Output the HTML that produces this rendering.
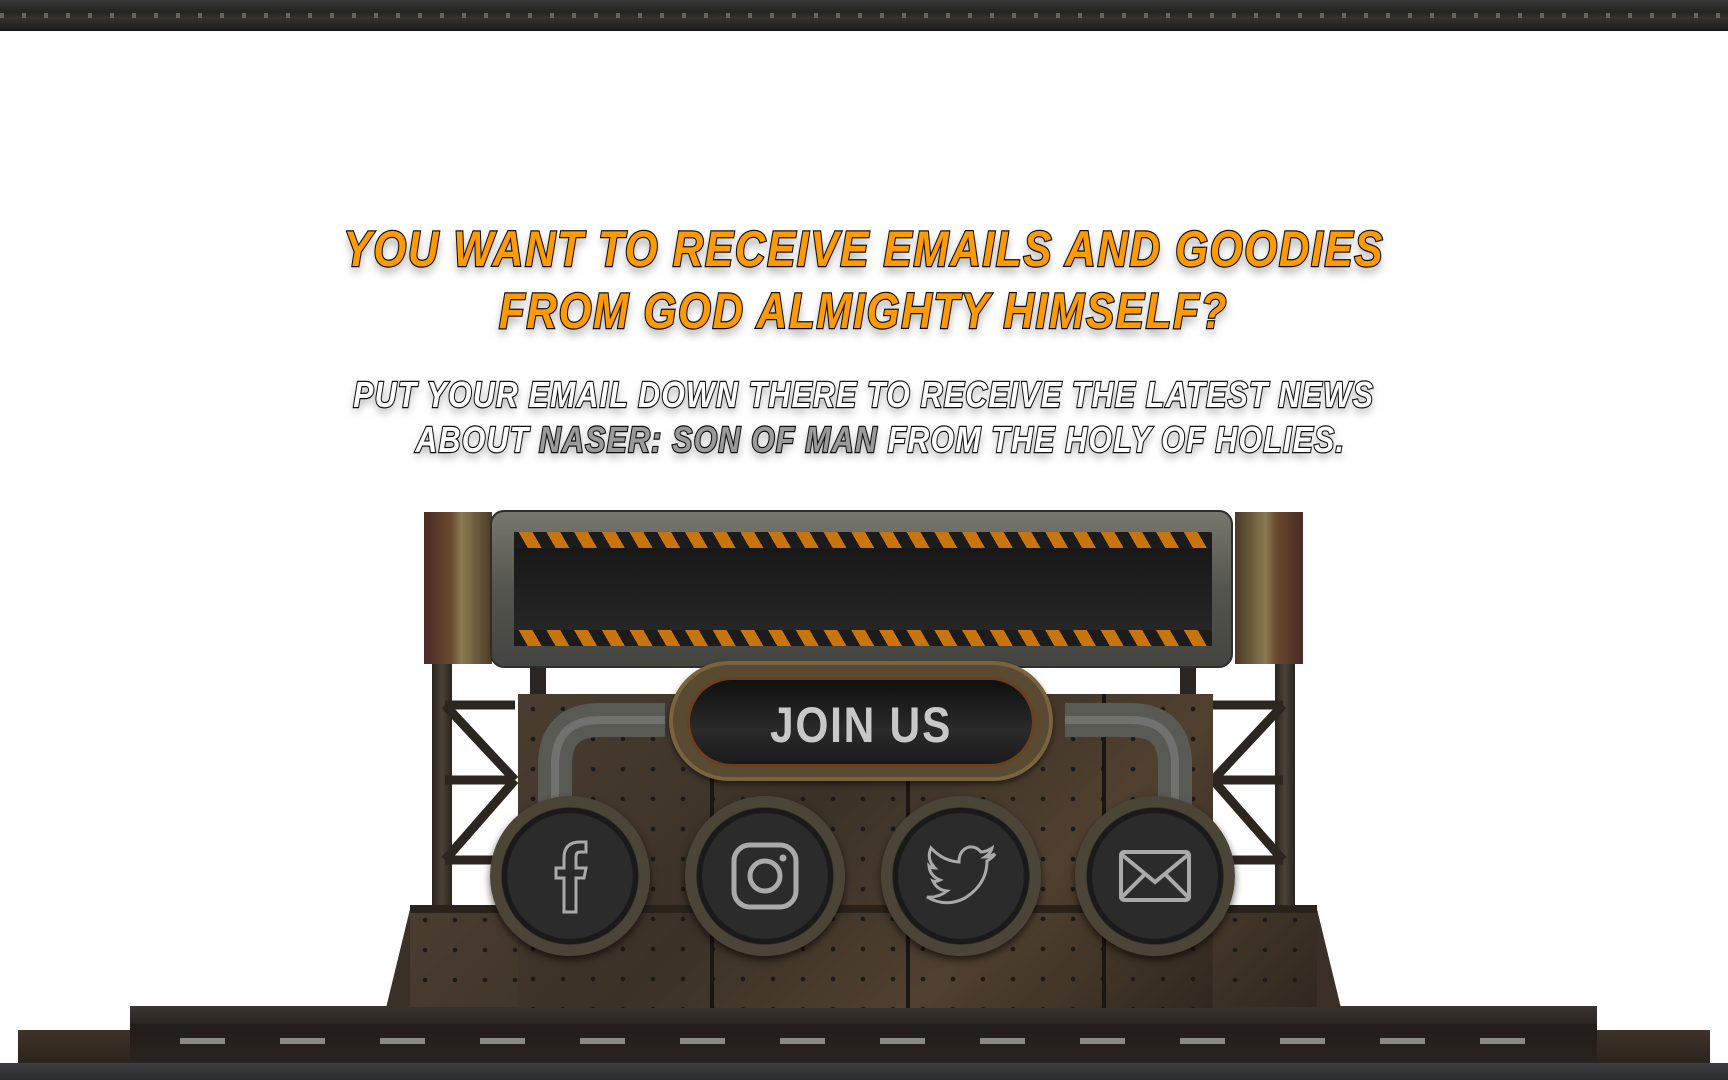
<!DOCTYPE html>
<html><head><meta charset="utf-8">
<style>
*{margin:0;padding:0;box-sizing:border-box}
body{width:1728px;height:1080px;background:#fff;position:relative;overflow:hidden;font-family:"Liberation Sans",sans-serif}
.abs{position:absolute}
.topbar{left:0;top:0;width:1728px;height:31px;background:linear-gradient(#3a3a36,#23231f 40%,#35332d 60%,#1b1b18);border-bottom:1px solid #111}
.topbar:after{content:"";position:absolute;left:0;right:0;top:13px;height:5px;background:repeating-linear-gradient(90deg,#6b6455 0 4px,transparent 4px 22px)}
.line{position:absolute;left:0;width:1728px;text-align:center;font-weight:bold;font-style:italic;white-space:nowrap}
.line span{display:inline-block;transform-origin:center}
.h{color:#ff9a00;font-size:50px;-webkit-text-stroke:2.5px #111;paint-order:stroke fill;text-shadow:0 6px 10px rgba(0,0,0,.35);letter-spacing:2px}
.h span{transform:scaleX(.845)}
.s{color:#fff;font-size:36px;-webkit-text-stroke:2.4px #111;paint-order:stroke fill;text-shadow:0 5px 9px rgba(0,0,0,.35);letter-spacing:1.5px}
.s span{transform:scaleX(.84)}
.g{color:#9a9a9a}
.metal{background:linear-gradient(#77776f,#55554f 50%,#444440);}
.body{background-image:radial-gradient(circle,#1a1a1a 0 2px,transparent 2.5px),linear-gradient(135deg,#4a3d30,#3a3127 40%,#50402f 70%,#302820);background-size:30px 30px,100% 100%}
.haz{background:repeating-linear-gradient(60deg,#1c1c1c 0 12px,#c87510 12px 24px)}
.port{position:absolute;width:160px;height:160px;border-radius:50%;background:radial-gradient(circle,#2b2b2b 0 55%,#1a1a1a 56% 60%,#4b4538 61% 72%,#2a2620 73% 76%,#5c5344 77% 90%,#2a241c 91%);box-shadow:0 4px 8px rgba(0,0,0,.6)}
.port svg{position:absolute;left:40px;top:40px}
</style></head><body>
<div class="abs topbar"></div>

<div class="line h" style="top:220px"><span>YOU WANT TO RECEIVE EMAILS AND GOODIES</span></div>
<div class="line h" style="top:282px"><span>FROM GOD ALMIGHTY HIMSELF?</span></div>
<div class="line s" style="top:374px"><span>PUT YOUR EMAIL DOWN THERE TO RECEIVE THE LATEST NEWS</span></div>
<div class="line s" style="top:419px;left:16px"><span>ABOUT <i class="g">NASER: SON OF MAN</i> FROM THE HOLY OF HOLIES.</span></div>

<!-- base platform -->
<div class="abs" style="left:18px;top:1030px;width:115px;height:34px;background:linear-gradient(#3f3328,#2a241e)"></div>
<div class="abs" style="left:1595px;top:1030px;width:115px;height:34px;background:linear-gradient(#3f3328,#2a241e)"></div>
<div class="abs" style="left:130px;top:1006px;width:1467px;height:58px;background:linear-gradient(#3a3530 0,#2b2623 30%,#221d1a 32%,#2a2420 100%)"></div>
<div class="abs" style="left:165px;top:1038px;width:1400px;height:6px;background:repeating-linear-gradient(90deg,transparent 0 15px,#8a8a84 15px 60px,transparent 60px 100px)"></div>
<div class="abs" style="left:0;top:1063px;width:1728px;height:17px;background:linear-gradient(#3d3f41,#292b2d)"></div>

<!-- scaffolding -->
<div class="abs" style="left:432px;top:660px;width:20px;height:260px;background:linear-gradient(90deg,#2a2520,#4a4238,#2a2520)"></div>
<div class="abs" style="left:1275px;top:660px;width:20px;height:260px;background:linear-gradient(90deg,#2a2520,#4a4238,#2a2520)"></div>
<svg class="abs" style="left:440px;top:690px" width="80" height="220"><path d="M5 15 L75 90 M75 90 L5 170 M5 15H75 M5 90H75 M5 170H75" stroke="#2c2620" stroke-width="9" fill="none"/></svg>
<svg class="abs" style="left:1208px;top:690px" width="80" height="220"><path d="M75 15 L5 90 M5 90 L75 170 M5 15H75 M5 90H75 M5 170H75" stroke="#2c2620" stroke-width="9" fill="none"/></svg>

<!-- sign supports -->
<div class="abs" style="left:530px;top:665px;width:16px;height:35px;background:#2a2520"></div>
<div class="abs" style="left:1180px;top:665px;width:16px;height:35px;background:#2a2520"></div>

<!-- lower body trapezoid -->
<svg class="abs" style="left:386px;top:905px" width="955" height="103"><path d="M25 0H930L955 103H0Z" fill="#3a3028"/></svg>
<div class="abs body" style="left:410px;top:905px;width:907px;height:102px"></div>
<div class="abs body" style="left:518px;top:694px;width:695px;height:314px"></div>
<div class="abs" style="left:518px;top:694px;width:695px;height:314px;background:repeating-linear-gradient(90deg,transparent 0 192px,#1a1612 192px 196px)"></div>
<div class="abs" style="left:410px;top:905px;width:907px;height:8px;background:#2a231c"></div>

<!-- pipes -->
<svg class="abs" style="left:525px;top:695px" width="140" height="130"><path d="M30 130V70Q30 25 75 25H140" stroke="#5a5a55" stroke-width="34" fill="none"/><path d="M30 130V70Q30 25 75 25H140" stroke="#888" stroke-width="8" fill="none" opacity=".5"/></svg>
<svg class="abs" style="left:1065px;top:695px" width="140" height="130"><path d="M110 130V70Q110 25 65 25H0" stroke="#5a5a55" stroke-width="34" fill="none"/><path d="M110 130V70Q110 25 65 25H0" stroke="#888" stroke-width="8" fill="none" opacity=".5"/></svg>

<!-- sign -->
<div class="abs" style="left:424px;top:512px;width:68px;height:152px;background:linear-gradient(90deg,#4a2a24,#6a4a30 40%,#8a7a52 55%,#4a3a26)"></div>
<div class="abs" style="left:1235px;top:512px;width:68px;height:152px;background:linear-gradient(90deg,#4a3a26,#8a7a52 45%,#6a4a30 60%,#4a2a24)"></div>
<div class="abs metal" style="left:490px;top:510px;width:743px;height:158px;border-radius:14px;border:2px solid #2e2e2a"></div>
<div class="abs haz" style="left:514px;top:532px;width:698px;height:16px"></div>
<div class="abs" style="left:514px;top:548px;width:698px;height:82px;background:linear-gradient(#181818,#262626)"></div>
<div class="abs haz" style="left:514px;top:630px;width:698px;height:16px"></div>

<!-- join us -->
<div class="abs" style="left:669px;top:661px;width:384px;height:120px;border-radius:60px;background:#5a4a32;border:4px solid #7a6440;box-shadow:0 3px 6px rgba(0,0,0,.5)"></div>
<div class="abs" style="left:687px;top:677px;width:348px;height:90px;border-radius:45px;background:linear-gradient(#101010,#2a2a2a 60%,#1a1a1a);border:3px solid #6a4020"></div>
<div class="abs" style="left:669px;top:696px;width:384px;text-align:center;font:bold 50px 'Liberation Sans',sans-serif;color:#c8c8c8;letter-spacing:2px"><span style="display:inline-block;transform:scaleX(.85)">JOIN US</span></div>

<!-- portholes -->
<div class="port" style="left:490px;top:796px"><svg width="80" height="80" viewBox="0 0 80 80"><path d="M34 76V42H26V32H34V22Q34 6 50 6H56V16H50Q46 16 46 21V32H56L54 42H46V76Z" fill="none" stroke="#aaa" stroke-width="3"/></svg></div>
<div class="port" style="left:685px;top:796px"><svg width="80" height="80" viewBox="0 0 80 80"><rect x="9" y="9" width="62" height="62" rx="16" fill="none" stroke="#aaa" stroke-width="5"/><circle cx="40" cy="40" r="15" fill="none" stroke="#aaa" stroke-width="5"/><circle cx="58" cy="22" r="3.5" fill="#aaa"/></svg></div>
<div class="port" style="left:881px;top:796px"><svg width="80" height="80" viewBox="0 0 80 80"><path d="M74 18Q68 21 64 21Q70 17 71 12Q65 16 60 16Q55 10 48 11Q38 14 38 26Q22 25 10 12Q5 23 14 32Q10 32 8 30Q9 40 19 44Q15 46 12 45Q16 54 26 55Q17 62 6 61Q25 72 44 62Q66 48 66 25Q71 22 74 18Z" fill="none" stroke="#aaa" stroke-width="3"/></svg></div>
<div class="port" style="left:1075px;top:796px"><svg width="80" height="80" viewBox="0 0 80 80"><rect x="6" y="16" width="68" height="48" rx="3" fill="none" stroke="#aaa" stroke-width="4"/><path d="M6 18L40 46L74 18M6 62L30 38M74 62L50 38" fill="none" stroke="#aaa" stroke-width="4"/></svg></div>
</body></html>
